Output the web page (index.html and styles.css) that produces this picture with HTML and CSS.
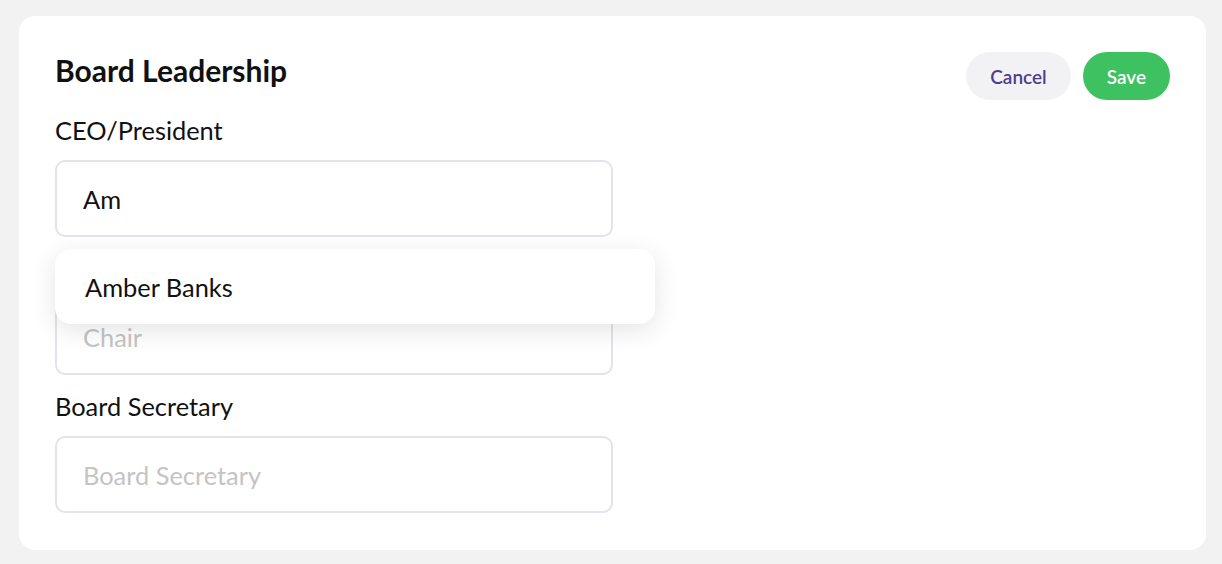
FILE: index.html
```html
<!DOCTYPE html>
<html lang="en">
<head>
    <title>Board Leadership</title>
    <link rel="stylesheet" href="styles.css">
</head>
<body>
    <div class="card">
        <div class="card-header">
            <h1>Board Leadership</h1>
            <div class="actions">
                <button type="button" class="btn btn-cancel">Cancel</button>
                <button type="button" class="btn btn-save">Save</button>
            </div>
        </div>

        <form class="fields">
            <!-- CEO with open suggestion list -->
            <div class="field">
                <label for="ceo">CEO/President</label>
                <div class="combo">
                    <input type="text" id="ceo" value="Am" placeholder="CEO/President" />
                    <ul class="suggestions">
                        <li>Amber Banks</li>
                    </ul>
                </div>
            </div>

            <div class="field">
                <label for="chair">Board Chair</label>
                <input type="text" id="chair" placeholder="Chair" />
            </div>

            <div class="field">
                <label for="secretary">Board Secretary</label>
                <input type="text" id="secretary" placeholder="Board Secretary" />
            </div>
        </form>
    </div>
</body>
</html>
```

FILE: styles.css
```css
* {
    box-sizing: border-box;
}

body {
    margin: 0;
    padding: 16px 16px 0 19px;
    background-color: #f2f2f2;
    font-family: Lato, "Open Sans", sans-serif;
    color: #111;
}

.card {
    background: #fff;
    border-radius: 16px;
    padding: 36px;
    height: 534px;
}

.card-header {
    display: flex;
    justify-content: space-between;
    align-items: flex-start;
    margin-bottom: 15px;
}

h1 {
    margin: 1px 0 0 0;
    font-size: 30px;
    line-height: 34px;
    font-weight: 700;
    color: #111;
}

.actions {
    display: flex;
    gap: 12px;
}

.btn {
    height: 48px;
    padding: 0 24px;
    border: none;
    border-radius: 24px;
    font-family: Lato, sans-serif;
    font-size: 19px;
    font-weight: 600;
    cursor: pointer;
}

.btn-cancel {
    background-color: #f2f2f4;
    color: #4b3f8c;
}

.btn-save {
    background-color: #3ec160;
    color: #fff;
}

.fields {
    display: flex;
    flex-direction: column;
    gap: 16px;
}

.field label {
    display: block;
    margin: 0 0 15px 0;
    font-size: 25.4px;
    line-height: 30px;
    color: #111;
}

.combo {
    position: relative;
}

input[type="text"] {
    display: block;
    width: 558px;
    height: 77px;
    padding: 0 26px;
    border: 2px solid #e3e3e9;
    border-radius: 10px;
    font-family: Lato, sans-serif;
    font-size: 25.4px;
    color: #111;
    background: #fff;
    outline: none;
}

input::placeholder {
    color: #c4c4c4;
}

.suggestions {
    position: absolute;
    top: 89px;
    left: 0;
    z-index: 2;
    width: 600px;
    height: 75px;
    margin: 0;
    padding: 23px 30px 0;
    list-style: none;
    background: #fff;
    border-radius: 16px;
    box-shadow: 0 6px 26px rgba(0, 0, 0, 0.11);
}

.suggestions li {
    font-size: 25.4px;
    line-height: 30px;
    color: #111;
}
```
